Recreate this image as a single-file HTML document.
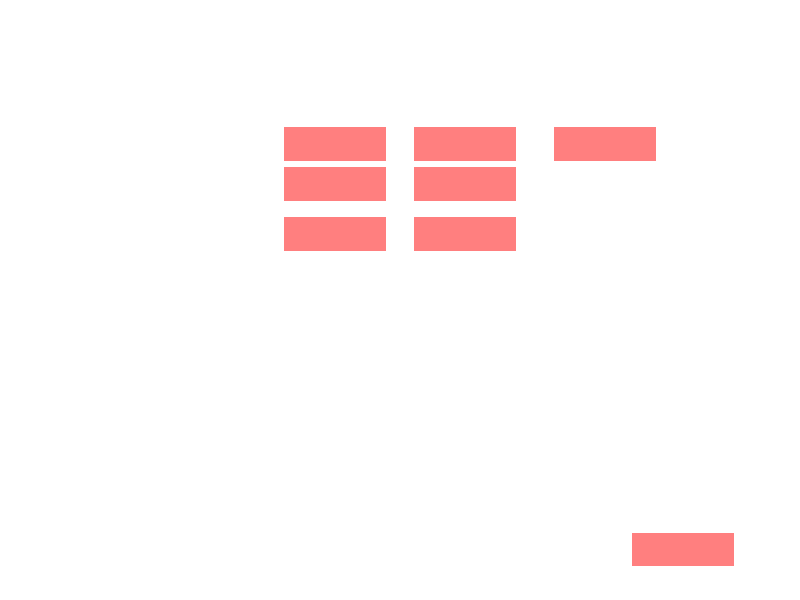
<!DOCTYPE html>
<html><head><style>
html,body{margin:0;padding:0;width:800px;height:600px;background:#fff;overflow:hidden;position:relative}
div{position:absolute;background:#ff7f7f;width:102px;height:34px}
</style></head><body>
<div style="left:284px;top:127px"></div>
<div style="left:414px;top:127px"></div>
<div style="left:554px;top:127px"></div>
<div style="left:284px;top:167px"></div>
<div style="left:414px;top:167px"></div>
<div style="left:284px;top:217px"></div>
<div style="left:414px;top:217px"></div>
<div style="left:632px;top:533px;height:33px"></div>
</body></html>
